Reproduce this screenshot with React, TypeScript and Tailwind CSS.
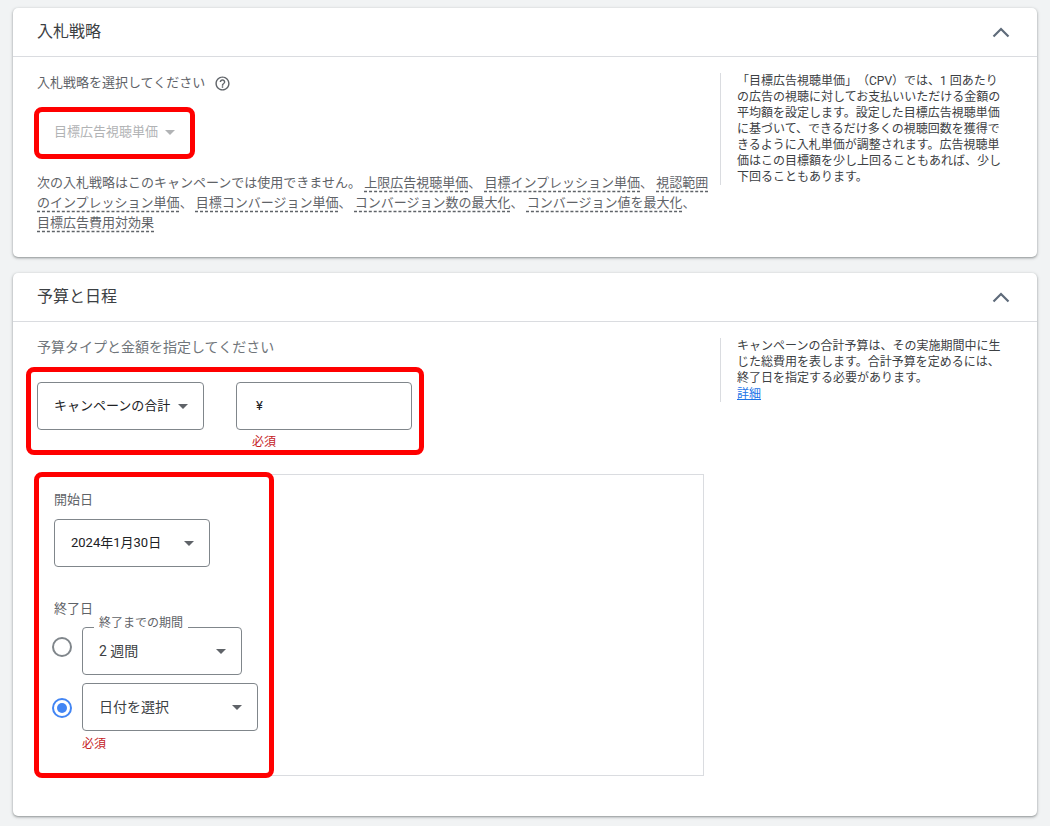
import React from 'react';

function Arrow({ color = 'border-t-[#5f6368]' }: { color?: string }) {
  return <span className={`h-0 w-0 border-x-[5px] border-t-[5px] border-x-transparent ${color}`} />;
}

function Chevron() {
  return (
    <svg width="18" height="12" viewBox="0 0 18 12" fill="none" className="mr-[27px]">
      <path d="M1.5 10.5 9 3l7.5 7.5" stroke="#5f6b7a" strokeWidth="2.2" />
    </svg>
  );
}

function Select({ label, className, textClass }: { label: string; className: string; textClass: string }) {
  return (
    <div className={`flex h-12 items-center justify-between rounded-[4px] border border-[#80868b] bg-white pl-4 ${className}`}>
      <span className={textClass}>{label}</span>
      <Arrow />
    </div>
  );
}

function Term({ children }: { children: React.ReactNode }) {
  return <span className="underline decoration-[#5f6368] decoration-dashed underline-offset-[4px]">{children}</span>;
}

function Panel({ title, children }: { title: string; children: React.ReactNode }) {
  return (
    <section className="relative rounded-[5px] bg-white shadow-[0_1px_2px_rgba(60,64,67,0.4),0_1px_3px_1px_rgba(60,64,67,0.15)]">
      <header className="flex h-[49px] items-center justify-between border-b border-[#dadce0] pl-6">
        <h2 className="text-base font-normal text-[#3c4043]">{title}</h2>
        <Chevron />
      </header>
      {children}
    </section>
  );
}

function Aside({ children, className }: { children: React.ReactNode; className: string }) {
  return (
    <aside className={`ml-2 w-[290px] shrink-0 border-l border-[#dadce0] pl-4 pr-[1px] text-xs leading-4 text-[#3c4043] [text-spacing-trim:space-all] ${className}`}>
      {children}
    </aside>
  );
}

function Radio({ checked, className }: { checked?: boolean; className?: string }) {
  return (
    <span
      className={`flex h-5 w-5 shrink-0 items-center justify-center rounded-full border-2 ${
        checked ? 'border-[#4285f4]' : 'border-[#80868b]'
      } ${className ?? ''}`}
    >
      {checked && <span className="h-[10px] w-[10px] rounded-full bg-[#4285f4]" />}
    </span>
  );
}

export default function App() {
  return (
    <div className="h-[826px] overflow-hidden bg-[#f1f3f4] px-[13px] pt-2 font-['Roboto','Noto_Sans_CJK_JP',sans-serif]">
      <Panel title="入札戦略">
        <div className="flex h-[200px] pl-6 pt-4">
          <div className="w-[675px] shrink-0 text-[13px] text-[#5f6368]">
            <div className="flex h-5 items-center">
              入札戦略を選択してください
              <svg width="17" height="17" viewBox="0 0 24 24" fill="#5f6368" className="ml-[9px]">
                <path d="M11 18h2v-2h-2v2zm1-16C6.48 2 2 6.48 2 12s4.48 10 10 10 10-4.48 10-10S17.52 2 12 2zm0 18c-4.41 0-8-3.59-8-8s3.59-8 8-8 8 3.59 8 8-3.59 8-8 8zm0-14c-2.21 0-4 1.79-4 4h2c0-1.1.9-2 2-2s2 .9 2 2c0 2-3 1.75-3 5h2c0-2.25 3-2.5 3-5 0-2.21-1.79-4-4-4z" />
              </svg>
            </div>
            <div className="mt-[27px] flex h-6 items-center gap-[7px] pl-[17px] text-[#b1b3b5]">
              目標広告視聴単価
              <Arrow color="border-t-[#b1b3b5]" />
            </div>
            <p className="mt-[29px] leading-[20px]">
              次の入札戦略はこのキャンペーンでは使用できません。 <Term>上限広告視聴単価</Term>、 <Term>目標インプレッション単価</Term>、{' '}
              <Term>視認範囲のインプレッション単価</Term>、 <Term>目標コンバージョン単価</Term>、 <Term>コンバージョン数の最大化</Term>、{' '}
              <Term>コンバージョン値を最大化</Term>、 <br />
              <Term>目標広告費用対効果</Term>
            </p>
          </div>
          <Aside className="h-[112px]">
            「目標広告視聴単価」（CPV）では、1 回あたり
            <br />
            の広告の視聴に対してお支払いいただける金額の平均額を設定します。設定した目標広告視聴単価に基づいて、できるだけ多くの視聴回数を獲得できるように入札単価が調整されます。広告視聴単価はこの目標額を少し上回ることもあれば、少し下回ることもあります。
          </Aside>
        </div>
        <div className="pointer-events-none absolute left-[21px] top-[99px] h-[52px] w-[161px] rounded-[8px] border-[5px] border-[#ff0000]" />
      </Panel>

      <div className="mt-4">
        <Panel title="予算と日程">
          <div className="flex h-[494px] pl-6 pt-[15px]">
            <div className="w-[675px] shrink-0">
              <div className="h-5 text-sm leading-5 text-[#70757a]">予算タイプと金額を指定してください</div>
              <div className="mt-[25px] flex gap-8">
                <Select label="キャンペーンの合計" className="w-[167px] pr-[15px]" textClass="text-[13px] text-[#202124]" />
                <div>
                  <div className="flex h-12 w-[176px] items-center rounded-[4px] border border-[#80868b] pl-[19px] text-[13px] text-[#202124]">
                    ¥
                  </div>
                  <div className="mt-[4px] pl-4 text-xs leading-4 text-[#c5221f]">必須</div>
                </div>
              </div>
              <div className="mt-[24px] h-[302px] w-[667px] border border-[#dadce0] pl-4 pt-[15px]">
                <div className="text-[13px] leading-5 text-[#5f6368]">開始日</div>
                <Select label="2024年1月30日" className="mt-[9px] w-[156px] pr-[15px]" textClass="text-[13px] text-[#202124]" />
                <div className="mt-[32px] text-[13px] leading-5 text-[#5f6368]">終了日</div>
                <div className="-ml-[2px] mt-2 flex items-start gap-[10px]">
                  <Radio className="mt-[10px]" />
                  <div className="relative">
                    <Select label="2 週間" className="w-[160px] pr-[15px]" textClass="text-sm text-[#3c4043]" />
                    <span className="absolute -top-[14px] left-[12px] bg-white px-[5px] text-xs leading-5 text-[#5f6368]">
                      終了までの期間
                    </span>
                  </div>
                </div>
                <div className="-ml-[2px] mt-2 flex items-start gap-[10px]">
                  <Radio checked className="mt-[15px]" />
                  <Select label="日付を選択" className="w-[176px] pr-[15px]" textClass="text-sm text-[#3c4043]" />
                </div>
                <div className="ml-7 mt-[5px] text-xs leading-4 text-[#c5221f]">必須</div>
              </div>
            </div>
            <Aside className="mt-[1px] h-16">
              キャンペーンの合計予算は、その実施期間中に生じた総費用を表します。合計予算を定めるには、終了日を指定する必要があります。
              <br />
              <span className="text-[#1a73e8] underline">詳細</span>
            </Aside>
          </div>
          <div className="pointer-events-none absolute left-[13px] top-[94px] h-[88px] w-[398px] rounded-[8px] border-[5px] border-[#ff0000]" />
          <div className="pointer-events-none absolute left-[21px] top-[199px] h-[306px] w-[240px] rounded-[8px] border-[5px] border-[#ff0000]" />
        </Panel>
      </div>
    </div>
  );
}
